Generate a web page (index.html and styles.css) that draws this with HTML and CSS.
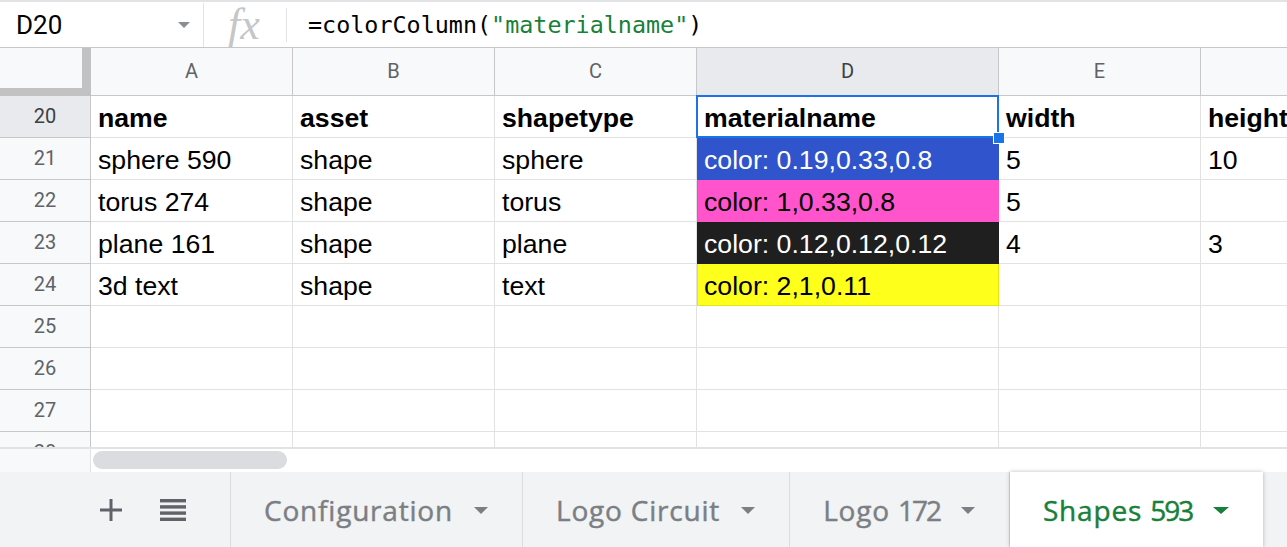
FILE: index.html
```html
<!DOCTYPE html>
<html>
<head>
<meta charset="utf-8">
<link rel="stylesheet" href="styles.css">
</head>
<body>
<div class="app">
  <div class="formula-bar">
    <div class="namebox">
      <span class="ref">D20</span>
      <svg class="caret" width="12" height="6" viewBox="0 0 12 6"><path d="M0 0h12L6 6z" fill="#8a8d91"/></svg>
    </div>
    <div class="fx">fx</div>
    <div class="formula">=colorColumn(<span class="str">"materialname"</span>)</div>
  </div>

  <div class="grid">
    <div class="corner"></div>
    <div class="colh">A</div>
    <div class="colh">B</div>
    <div class="colh">C</div>
    <div class="colh sel">D</div>
    <div class="colh">E</div>
    <div class="colh">F</div>

    <div class="rowh sel">20</div>
    <div class="cell b">name</div>
    <div class="cell b">asset</div>
    <div class="cell b">shapetype</div>
    <div class="cell b active">materialname<span class="handle"></span></div>
    <div class="cell b">width</div>
    <div class="cell b">height</div>

    <div class="rowh">21</div>
    <div class="cell">sphere 590</div>
    <div class="cell">shape</div>
    <div class="cell">sphere</div>
    <div class="cell c-blue">color: 0.19,0.33,0.8</div>
    <div class="cell">5</div>
    <div class="cell">10</div>

    <div class="rowh">22</div>
    <div class="cell">torus 274</div>
    <div class="cell">shape</div>
    <div class="cell">torus</div>
    <div class="cell c-pink">color: 1,0.33,0.8</div>
    <div class="cell">5</div>
    <div class="cell"></div>

    <div class="rowh">23</div>
    <div class="cell">plane 161</div>
    <div class="cell">shape</div>
    <div class="cell">plane</div>
    <div class="cell c-dark">color: 0.12,0.12,0.12</div>
    <div class="cell">4</div>
    <div class="cell">3</div>

    <div class="rowh">24</div>
    <div class="cell">3d text</div>
    <div class="cell">shape</div>
    <div class="cell">text</div>
    <div class="cell c-yellow">color: 2,1,0.11</div>
    <div class="cell"></div>
    <div class="cell"></div>

    <div class="rowh">25</div>
    <div class="cell"></div><div class="cell"></div><div class="cell"></div><div class="cell"></div><div class="cell"></div><div class="cell"></div>
    <div class="rowh">26</div>
    <div class="cell"></div><div class="cell"></div><div class="cell"></div><div class="cell"></div><div class="cell"></div><div class="cell"></div>
    <div class="rowh">27</div>
    <div class="cell"></div><div class="cell"></div><div class="cell"></div><div class="cell"></div><div class="cell"></div><div class="cell"></div>
    <div class="rowh">28</div>
    <div class="cell"></div><div class="cell"></div><div class="cell"></div><div class="cell"></div><div class="cell"></div><div class="cell"></div>
  </div>

  <div class="hscroll">
    <div class="hs-left"></div>
    <div class="hs-track"><div class="thumb"></div></div>
  </div>

  <div class="tabbar">
    <div class="tab-tools">
      <svg class="plus" width="22" height="22" viewBox="0 0 22 22"><path d="M9.5 0h3v9.5H22v3h-9.5V22h-3v-9.5H0v-3h9.5z" fill="#5f6368"/></svg>
      <svg class="list" width="26" height="22" viewBox="0 0 26 22"><rect x="0" y="0" width="26" height="3.4" fill="#5f6368"/><rect x="0" y="6.2" width="26" height="3.4" fill="#5f6368"/><rect x="0" y="12.4" width="26" height="3.4" fill="#5f6368"/><rect x="0" y="18.6" width="26" height="3.4" fill="#5f6368"/></svg>
    </div>
    <div class="tab"><span class="tab-name">Configuration</span><span class="tri"></span></div>
    <div class="tab"><span class="tab-name">Logo Circuit</span><span class="tri"></span></div>
    <div class="tab"><span class="tab-name">Logo <span class="num">172</span></span><span class="tri"></span></div>
    <div class="tab current"><span class="tab-name">Shapes <span class="num">593</span></span><span class="tri"></span></div>
    <div class="tab-rest"></div>
  </div>
</div>
</body>
</html>
```

FILE: styles.css
```css
html, body {
  margin: 0;
  padding: 0;
  background: #ffffff;
}

.app {
  width: 1287px;
  height: 547px;
  overflow: hidden;
  display: flex;
  flex-direction: column;
  font-family: Roboto, "Liberation Sans", Arial, sans-serif;
}

/* ---------- formula bar ---------- */
.formula-bar {
  height: 48px;
  box-sizing: border-box;
  border-top: 2px solid #e1e3e6;
  border-bottom: 1px solid #c7c7c7;
  display: flex;
  align-items: center;
  flex: none;
}

.namebox {
  width: 204px;
  height: 44px;
  box-sizing: border-box;
  border-right: 1px solid #e1e3e6;
  display: flex;
  align-items: center;
  padding-left: 16px;
  padding-right: 13px;
}

.ref {
  font-family: Roboto, sans-serif;
  font-size: 26px;
  color: #000;
  flex: 1;
}

.caret {
  display: block;
}

.fx {
  width: 83px;
  height: 34px;
  box-sizing: border-box;
  border-right: 1px solid #e1e3e6;
  display: flex;
  align-items: center;
  font-family: "Liberation Serif", "DejaVu Serif", serif;
  font-style: italic;
  font-size: 44px;
  line-height: 34px;
  color: #c4c6c9;
  padding-left: 24px;
}

.formula {
  padding-left: 21px;
  font-family: "DejaVu Sans Mono", "Liberation Mono", monospace;
  font-size: 23.4px;
  color: #000;
  white-space: nowrap;
}

.formula .str {
  color: #188038;
}

/* ---------- grid ---------- */
.grid {
  height: 399px;
  flex: none;
  overflow: hidden;
  display: grid;
  grid-template-columns: 91px 202px 202px 202px 302px 202px 202px;
  grid-template-rows: 48px repeat(9, 42px);
  width: 1403px;
}

.corner {
  box-sizing: border-box;
  background: #f8f9fa;
  border-right: 9px solid #c2c2c2;
  border-bottom: 8px solid #c2c2c2;
}

.colh {
  box-sizing: border-box;
  background: #f8f9fa;
  border-right: 1px solid #c7c7c7;
  border-bottom: 1px solid #c7c7c7;
  display: flex;
  align-items: center;
  justify-content: center;
  font-size: 20px;
  color: #5f6368;
  padding-bottom: 2px;
}

.colh.sel {
  background: #e8eaed;
  color: #3c4043;
}

.rowh {
  box-sizing: border-box;
  background: #f8f9fa;
  border-right: 1px solid #c7c7c7;
  border-bottom: 1px solid #c7c7c7;
  display: flex;
  align-items: center;
  justify-content: center;
  font-size: 20px;
  color: #5f6368;
  padding-bottom: 1px;
}

.rowh.sel {
  background: #e8eaed;
  color: #3c4043;
}

.cell {
  box-sizing: border-box;
  border-right: 1px solid #e2e2e2;
  border-bottom: 1px solid #e2e2e2;
  display: flex;
  align-items: flex-end;
  padding: 0 4px 4px 7px;
  font-family: "Liberation Sans", Arial, sans-serif;
  font-size: 26.67px;
  line-height: 30px;
  color: #000;
  white-space: nowrap;
  overflow: hidden;
}

.cell.b {
  font-weight: bold;
}

.cell.active {
  position: relative;
  overflow: visible;
}

.cell.active::after {
  content: "";
  position: absolute;
  left: -1px;
  top: -1px;
  right: -1px;
  bottom: -1px;
  border: 2px solid #1a73e8;
  pointer-events: none;
}

.handle {
  position: absolute;
  right: -7px;
  bottom: -7px;
  width: 10px;
  height: 10px;
  background: #1a73e8;
  border: 1px solid #ffffff;
  z-index: 2;
}

.c-blue {
  background: #3054cc;
  color: #ffffff;
  border-color: #3054cc;
}

.c-pink {
  background: #ff54cc;
  border-color: #ff54cc;
  box-shadow: inset 1px 0 0 rgba(0, 0, 0, 0.08);
}

.c-dark {
  background: #1f1f1f;
  color: #ffffff;
  border-color: #1f1f1f;
}

.c-yellow {
  background: #ffff1c;
  border-color: #e3e31a;
  box-shadow: inset 1px 0 0 #e3e31a;
}

/* ---------- horizontal scrollbar ---------- */
.hscroll {
  height: 25px;
  flex: none;
  display: flex;
  box-sizing: border-box;
  border-top: 2px solid #e2e2e2;
}

.hs-left {
  width: 91px;
  box-sizing: border-box;
  background: #f8f9fa;
  border-right: 1px solid #e2e2e2;
}

.hs-track {
  flex: 1;
  padding: 2px 0 0 2px;
}

.thumb {
  width: 194px;
  height: 18px;
  border-radius: 9px;
  background: #dadce0;
}

/* ---------- sheet tabs ---------- */
.tabbar {
  flex: 1;
  display: flex;
  background: #f1f3f4;
}

.tab-tools {
  width: 231px;
  box-sizing: border-box;
  display: flex;
  align-items: center;
  padding-left: 100px;
  gap: 38px;
  border-right: 1px solid #dadce0;
  padding-top: 1px;
}

.plus, .list {
  display: block;
}

.tab {
  display: flex;
  align-items: center;
  padding: 1px 34px 0 33px;
  gap: 21px;
  border-right: 1px solid #dadce0;
  font-family: "Open Sans", Roboto, sans-serif;
  font-size: 28px;
  letter-spacing: 0.8px;
  -webkit-text-stroke: 0.45px currentColor;
  color: #7b7f84;
  white-space: nowrap;
}

.tab .num {
  letter-spacing: -2px;
}

.tri {
  width: 0;
  height: 0;
  border-left: 7px solid transparent;
  border-right: 7px solid transparent;
  border-top: 7px solid #7b7f84;
}

.tab.current {
  background: #ffffff;
  color: #188038;
  border-right: none;
  box-shadow: 0 0 4px rgba(60, 64, 67, 0.35);
  position: relative;
}

.tab.current .tri {
  border-top-color: #188038;
  border-left-width: 8px;
  border-right-width: 8px;
}

.tab-rest {
  flex: 1;
}
```
